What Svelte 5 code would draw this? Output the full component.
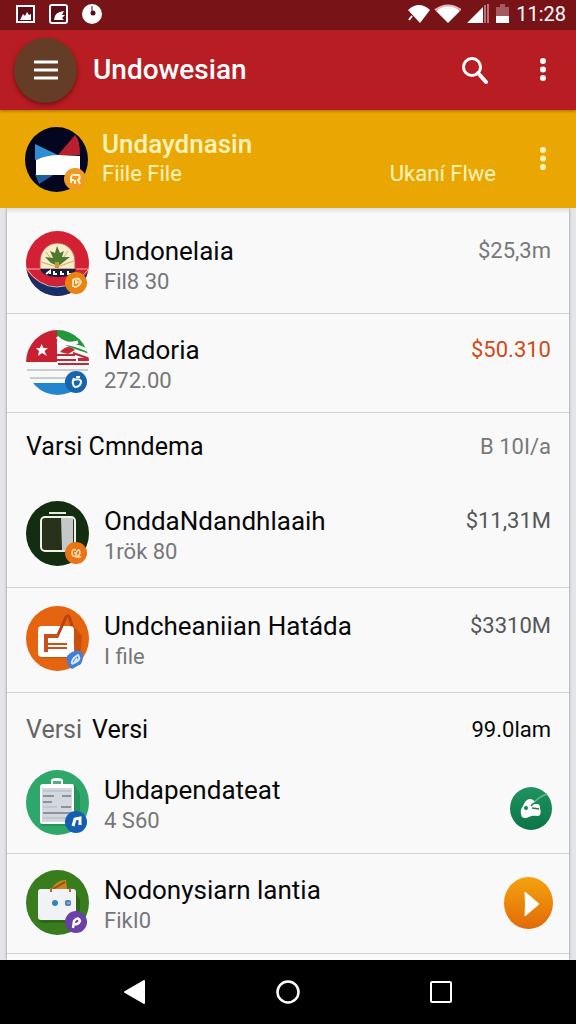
<script>
  const groups = [
    {
      id: 'first',
      rows: [
        { title: 'Undonelaia', sub: 'Fil8 30', amount: '$25,3m', tone: 'soft', icon: 'emblem', badge: '#e98312' },
        { title: 'Madoria', sub: '272.00', amount: '$50.310', tone: 'hot', icon: 'flag', badge: '#1765ae' },
      ],
    },
    {
      id: 'second',
      heading: { strong: 'Varsi Cmndema', amount: 'B 10I/a', tone: 'soft' },
      rows: [
        { title: 'OnddaNdandhlaaih', sub: '1rök 80', amount: '$11,31M', tone: 'mid', icon: 'device', badge: '#ec7414' },
        { title: 'Undcheaniian Hatáda', sub: 'I file', amount: '$3310M', tone: 'mid', icon: 'note', badge: '#437ed8' },
      ],
    },
    {
      id: 'third',
      heading: { faint: 'Versi', strong: 'Versi', amount: '99.0lam', tone: 'strong' },
      rows: [
        { title: 'Uhdapendateat', sub: '4 S60', action: 'sync', icon: 'clipboard', badge: '#145fb4' },
        { title: 'Nodonysiarn lantia', sub: 'FikI0', action: 'play', icon: 'bag', badge: '#6840a6' },
      ],
    },
  ];
</script>

{#snippet dots()}
  <svg width="8" height="26" viewBox="0 0 8 26" fill="currentColor" aria-hidden="true">
    <circle cx="4" cy="4" r="3" /><circle cx="4" cy="12.500" r="3" /><circle cx="4" cy="21" r="3" />
  </svg>
{/snippet}

{#snippet avatar(name, badge)}
  <svg class="avatar" width="64" height="65" viewBox="0 0 64 65" aria-hidden="true">
    <defs>
      <clipPath id={`clip-${name}`}><ellipse cx="31.500" cy="32.500" rx="31.500" ry="32.500" /></clipPath>
    </defs>
    <g clip-path={`url(#clip-${name})`}>
      {#if name === 'header'}
        <rect width="64" height="65" fill="#04061f" />
        <path d="M10 17L33 28L10 33z" fill="#2d8fd2" />
        <path d="M33 28L50 8Q55 12 55 28z" fill="#b9202b" />
        <path d="M10 47H30L14 57z" fill="#1d5f9c" />
        <path d="M11 33Q22 28 34 28L55 29V48H11z" fill="#fff" />
      {:else if name === 'emblem'}
        <rect width="64" height="65" fill="#d32035" />
        <path d="M0 38Q8 54 31 55Q55 54 64 38V65H0z" fill="#172f68" />
        <path d="M0 37Q13 56 31 56Q48 56 64 37" fill="none" stroke="#e9b9b4" stroke-width="1" />
        <path d="M0 38H64" stroke="#eeb5ad" />
        <path d="M14 38V30A17.500 18 0 0 1 49 30V38z" fill="#f7edc9" stroke="#c94c42" />
        <path d="M15 31L31 36L48 30M20 21L31 36L42 20" fill="none" stroke="#cca875" />
        <path d="M31 15L34 22L38 20L36 26L44 26L35 33L32 35L25 32L19 26L27 27L24 20L29 22z" fill="#4f7830" />
        <rect x="29" y="31" width="4" height="6" fill="#c59b2d" />
        <path d="M14 38H50Q48 46 31 46Q17 46 14 38z" fill="#151f42" />
        <path d="M20 43L24 40V43M28 40V43H31M35 40V43H38M42 40V43H45" fill="none" stroke="#fff" stroke-width="2" />
      {:else if name === 'flag'}
        <rect width="64" height="65" fill="#f8f8f6" />
        <rect width="31" height="32" fill="#c91f32" />
        <path d="M15.500 14L17.500 18L22 18L18.500 21L21 26L16 23L12 26L13 21L10 18H14z" fill="#fff" />
        <path d="M31 0H56L64 24L43 17L31 9z" fill="#24973b" />
        <path d="M31 7Q40 16 52 12M31 14Q42 11 63 21" fill="none" stroke="#fff" stroke-width="3" />
        <path d="M34 22Q42 13 49 20L42 24zM52 28H64V31H52z" fill="#c62635" />
        <path d="M31 25H49M31 30H50M32 34H64M47 23L64 29" stroke="#b92a3c" stroke-width="2" />
        <path d="M0 40H64M0 48H64" stroke="#b9bdc3" stroke-width="1.500" />
        <rect y="53" width="64" height="12" fill="#2385ce" />
      {:else if name === 'device'}
        <rect width="64" height="65" fill="#132d10" />
        <path d="M23 12H40" stroke="#e7eadf" stroke-width="2" />
        <rect x="15" y="16" width="34" height="34" rx="4" fill="#283119" />
        <path d="M35 17H47V49H36z" fill="#c4c8c8" />
        <rect x="15" y="16" width="34" height="34" rx="4" fill="none" stroke="#eef2e9" stroke-width="2" />
      {:else if name === 'note'}
        <rect width="64" height="65" fill="#e56410" />
        <path d="M46 18L56 30L54 52H16L13 50L49 46z" fill="#c9500b" />
        <rect x="12" y="20" width="36" height="31" rx="4" fill="#fff" />
        <path d="M31 31L40 11Q43 8 44 13L46 20" fill="none" stroke="#b94314" stroke-width="3" />
        <path d="M32 30H20V46" fill="none" stroke="#c8501c" stroke-width="4" />
        <path d="M19 38H41M21 42H41" fill="none" stroke="#c8501c" stroke-width="2" />
      {:else if name === 'clipboard'}
        <rect width="64" height="65" fill="#2fa76a" />
        <path d="M48 14L54 24V52L48 56H17L14 54z" fill="#249259" />
        <path d="M17 14H25V10Q26 8 31 8Q36 8 37 10V14H46Q48 14 48 17V52Q48 54 46 54H16Q14 54 14 51V17Q14 14 17 14z" fill="#fff" />
        <path d="M27 14V11H35V14z" fill="#52b184" />
        <rect x="16" y="18" width="30" height="34" fill="#d4d8dd" />
        <path d="M17 26H28M36 26H45M17 32H26M35 37H45M17 43H45" stroke="#89939e" stroke-width="2" />
        <path d="M17 21H45M17 37H31M17 48H45" stroke="#aeb5bf" />
      {:else}
        <rect width="64" height="65" fill="#397c1e" />
        <path d="M48 21L54 30V50L48 53H16L12 50z" fill="#2b6716" />
        <path d="M24 21Q31 9 40 10L41 20z" fill="#cb841d" />
        <path d="M27 19L39 12" stroke="#8e5013" stroke-width="2" />
        <rect x="12" y="19" width="38" height="31" rx="3" fill="#f0f2f6" />
        <path d="M25 18V22M44 18V22" stroke="#b96336" stroke-width="2" />
        <circle cx="29" cy="33" r="3" fill="#367fc6" />
        <rect x="39" y="30" width="6" height="6" rx="2" fill="#547fbf" />
        <path d="M41 33H44" stroke="#b8d5ef" />
      {/if}
    </g>
    {#if name === 'note'}
      <path d="M41 50Q46 44 55 45Q59 50 55 58L46 63Q40 60 41 50z" fill={badge} />
    {:else}
      <circle cx="50" cy="52" r="11" fill={badge} />
    {/if}
    <g fill="none" stroke="#fff" stroke-width="2">
      {#if name === 'header'}
        <path d="M46 56V51Q46 47 50 48L54 48Q56 51 53 53L55 57M46 53H49M50 57V53" stroke="#fff0c8" />
      {:else if name === 'emblem'}
        <path d="M47 56V49Q52 45 55 51Q53 56 48 56M50 53V50L53 52" stroke="#ffe3b9" />
      {:else if name === 'flag'}
        <path d="M48 48Q45 54 49 57Q55 57 55 51Q53 48 48 50M50 47H54" />
      {:else if name === 'device'}
        <path d="M50 49Q46 47 46 52Q46 56 50 55Q50 49 53 49Q56 52 51 56H55M48 52H51" stroke="#ffdfb6" stroke-width="1.500" />
      {:else if name === 'note'}
        <path d="M46 58Q45 53 52 49Q56 54 48 57L51 52" stroke="#d2e8ff" />
      {:else if name === 'clipboard'}
        <path d="M47 56L49 49L54 48V55" stroke-width="3" />
      {:else}
        <path d="M47 58L48 51Q52 46 54 51Q52 55 49 54" stroke-width="2.500" />
      {/if}
    </g>
  </svg>
{/snippet}

<div class="screen">
  <div class="status">
    <div class="status-side">
      <svg width="19" height="20" viewBox="0 0 19 20" aria-hidden="true">
        <rect x="1" y="2" width="17" height="16" fill="#5b0c16" stroke="#fff" stroke-width="2" />
        <path d="M4 16L7 10L9 12L11 8L13 11L15 10V16z" fill="#fff" />
      </svg>
      <svg width="19" height="20" viewBox="0 0 19 20" aria-hidden="true">
        <rect x="1" y="1" width="17" height="18" rx="2" fill="#5b0c16" stroke="#fff" stroke-width="2" />
        <path d="M5 16Q5 8 15 7L13 11H16L13 14L15 16z" fill="#fff" />
      </svg>
      <svg width="20" height="20" viewBox="0 0 20 20" aria-hidden="true">
        <circle cx="10" cy="10" r="10" fill="#fff" />
        <circle cx="11" cy="9" r="2.500" fill="#5b0c16" /><path d="M10 2V8" stroke="#5b0c16" />
      </svg>
    </div>
    <div class="status-side right">
      <svg width="53" height="20" viewBox="0 0 53 20" aria-hidden="true">
        <path d="M0 6Q11-4 22 6L12 19z" fill="#fff" /><path d="M1 16L4 12" stroke="#fff" stroke-width="2" />
        <path d="M28 7Q40-4 52 7L40 19z" fill="#fff" /><path d="M27 6Q40-3 53 6" fill="none" stroke="#e5b8bd" stroke-width="2" />
      </svg>
      <svg width="22" height="20" viewBox="0 0 22 20" aria-hidden="true">
        <path d="M0 19L16 3V19z" fill="#fff" /><path d="M18 1V19M21 0V19" stroke="#cf9198" stroke-width="1.500" />
      </svg>
      <svg width="15" height="20" viewBox="0 0 15 20" aria-hidden="true">
        <path d="M1 3H5V0H10V3H14V13H1z" fill="#a55a60" /><path d="M1 12H14V19H1z" fill="#fff" />
      </svg>
      <span class="time">11:28</span>
    </div>
  </div>

  <header class="appbar">
    <button class="menu" aria-label="Menu">
      <svg width="24" height="20" viewBox="0 0 24 20" aria-hidden="true">
        <path d="M1 2H23M1 10H23M1 18H23" stroke="#fff" stroke-width="3" stroke-linecap="round" />
      </svg>
    </button>
    <h1>Undowesian</h1>
    <button class="plain" aria-label="Search">
      <svg width="28" height="28" viewBox="0 0 28 28" fill="none" stroke="#fff" aria-hidden="true">
        <circle cx="11" cy="11" r="8.500" stroke-width="3" />
        <path d="M17 17L25 26" stroke-width="4" stroke-linecap="round" />
      </svg>
    </button>
    <button class="plain more" aria-label="More options">{@render dots()}</button>
  </header>

  <section class="account">
    {@render avatar('header', '#ee9a24')}
    <div class="account-text">
      <h2>Undaydnasin</h2>
      <div class="account-line"><span>Fiile File</span><span>Ukaní Flwe</span></div>
    </div>
    <button class="plain more" aria-label="Account options">{@render dots()}</button>
  </section>

  <main>
    <div class="card">
      {#each groups as group (group.id)}
        <section class={group.id}>
          {#if group.heading}
            <div class="heading">
              <h2>{#if group.heading.faint}<span class="faint">{group.heading.faint}</span>{/if}<span>{group.heading.strong}</span></h2>
              <span class={`amount ${group.heading.tone}`}>{group.heading.amount}</span>
            </div>
          {/if}
          <ul>
            {#each group.rows as row (row.title)}
              <li>
                {@render avatar(row.icon, row.badge)}
                <div class="text">
                  <h3>{row.title}</h3>
                  <p>{row.sub}</p>
                </div>
                {#if row.action === 'sync'}
                  <button class="round sync" aria-label="Sync">
                    <svg width="42" height="43" viewBox="0 0 42 43" aria-hidden="true">
                      <path d="M22 18Q28 10 37 7" fill="none" stroke="#64b78d" stroke-width="1.500" />
                      <path d="M12 30Q9 24 13 19Q16 11 21 12Q25 13 25 17Q30 16 30 21Q32 28 28 29Q22 28 19 30Q15 32 12 30z" fill="#fff" />
                      <path d="M21 19Q24 15 28 16M22 21L29 22" fill="none" stroke="#168456" stroke-width="1.500" />
                      <circle cx="16" cy="21" r="2" fill="#168456" />
                    </svg>
                  </button>
                {:else if row.action === 'play'}
                  <button class="round play" aria-label="Play">
                    <svg width="49" height="52" viewBox="0 0 49 52" aria-hidden="true">
                      <path d="M21 15L35 27L21 39Q22 27 21 15z" fill="#fff" stroke="#fff" stroke-linejoin="round" />
                    </svg>
                  </button>
                {:else}
                  <span class={`amount ${row.tone}`}>{row.amount}</span>
                {/if}
              </li>
            {/each}
          </ul>
        </section>
      {/each}
    </div>
  </main>

  <nav aria-label="System">
    <button class="plain" aria-label="Back">
      <svg width="24" height="26" viewBox="0 0 24 26" aria-hidden="true"><path d="M2 13L21 2V24z" fill="#fff" stroke="#fff" stroke-width="2" stroke-linejoin="round" /></svg>
    </button>
    <button class="plain" aria-label="Home">
      <svg width="24" height="26" viewBox="0 0 24 26" aria-hidden="true"><circle cx="12" cy="13" r="10.500" fill="none" stroke="#fff" stroke-width="2.500" /></svg>
    </button>
    <button class="plain" aria-label="Recent apps">
      <svg width="24" height="26" viewBox="0 0 24 26" aria-hidden="true"><rect x="2" y="3" width="20" height="20" rx="1" fill="none" stroke="#fff" stroke-width="2" /></svg>
    </button>
  </nav>
</div>

<style>
  :global(body) {
    background: #e3e5e8;
  }
  .screen {
    display: flex;
    flex-direction: column;
    min-height: 100vh;
    font-family: Roboto, sans-serif;
    color: #080808;
  }
  h1, h2, h3, p, ul {
    margin: 0;
    padding: 0;
    font-weight: 400;
  }
  svg {
    display: block;
    flex: none;
  }
  button {
    display: flex;
    align-items: center;
    justify-content: center;
    flex: none;
    border: 0;
    padding: 0;
    color: inherit;
    background: none;
    cursor: pointer;
  }
  .status {
    display: flex;
    justify-content: space-between;
    align-items: center;
    height: 30px;
    padding: 0 10px 0 16px;
    box-sizing: border-box;
    background: #781318;
    color: #fff;
  }
  .status-side {
    display: flex;
    align-items: center;
    gap: 14px;
    padding-bottom: 3px;
  }
  .right {
    gap: 6px;
  }
  .time {
    font-size: 20px;
    line-height: 24px;
  }
  .appbar {
    position: relative;
    display: flex;
    align-items: center;
    height: 80px;
    padding: 0 19px 0 14px;
    box-sizing: border-box;
    background: #b71d23;
    color: #fff;
    box-shadow: 0 1px 3px rgb(100 50 0 / 50%);
  }
  .menu {
    width: 63px;
    height: 65px;
    border-radius: 50%;
    background: #653c26;
    box-shadow: 0 2px 4px rgb(60 0 0 / 55%);
  }
  h1 {
    flex: 1;
    padding-left: 16px;
    font-size: 28px;
    line-height: 36px;
    font-weight: 500;
  }
  .plain {
    width: 28px;
    height: 48px;
  }
  .appbar .more {
    margin-left: 40px;
  }
  .account {
    display: flex;
    align-items: center;
    height: 98px;
    padding: 0 19px 0 25px;
    box-sizing: border-box;
    background: #eaa704;
    color: #fff3bc;
  }
  .account-text {
    flex: 1;
    padding: 0 0 2px 13px;
  }
  .account h2 {
    font-size: 26px;
    line-height: 32px;
    font-weight: 500;
  }
  .account-line {
    display: flex;
    justify-content: space-between;
    padding-right: 33px;
    font-size: 22px;
    line-height: 28px;
  }
  main {
    display: flex;
    flex: 1;
    padding: 0 7px;
  }
  .card {
    flex: 1;
    padding-top: 7px;
    background: linear-gradient(#dedede, #f9f9f9 6px);
    box-shadow: 0 0 3px rgb(0 0 0 / 40%);
    clip-path: inset(0 -4px);
  }
  .heading {
    display: flex;
    justify-content: space-between;
    height: 70px;
    padding: 16px 18px 0 19px;
    box-sizing: border-box;
    line-height: 36px;
  }
  .heading h2 {
    display: flex;
    gap: 10px;
    font-size: 25px;
  }
  .third .heading {
    height: 61px;
    padding-top: 19px;
  }
  .faint {
    color: #666;
  }
  li {
    display: flex;
    align-items: center;
    padding: 16px 16px 17px 19px;
    border-bottom: 1px solid #d2d2d6;
  }
  .second li {
    padding-top: 18px;
    padding-bottom: 21px;
  }
  .third li {
    padding-bottom: 18px;
  }
  .text {
    flex: 1;
    padding: 3px 0 0 14px;
  }
  h3 {
    font-size: 26px;
    line-height: 34px;
  }
  p {
    font-size: 22px;
    line-height: 28px;
    color: #76777a;
  }
  .amount {
    align-self: flex-start;
    padding: 2px 2px 0 0;
    font-size: 22px;
    line-height: 36px;
  }
  .heading .amount {
    padding: 0;
  }
  .soft {
    color: #77787a;
  }
  .mid {
    color: #55575a;
  }
  .hot {
    color: #d14a16;
  }
  .strong {
    color: #080808;
  }
  .round {
    border-radius: 50%;
  }
  .sync {
    margin: 12px 1px 0 0;
    background: linear-gradient(#20935f, #0b7548);
  }
  .play {
    background: linear-gradient(#f4a30e, #e36a08);
  }
  nav {
    display: flex;
    justify-content: center;
    align-items: center;
    gap: 125px;
    height: 64px;
    background: #000;
  }
</style>
